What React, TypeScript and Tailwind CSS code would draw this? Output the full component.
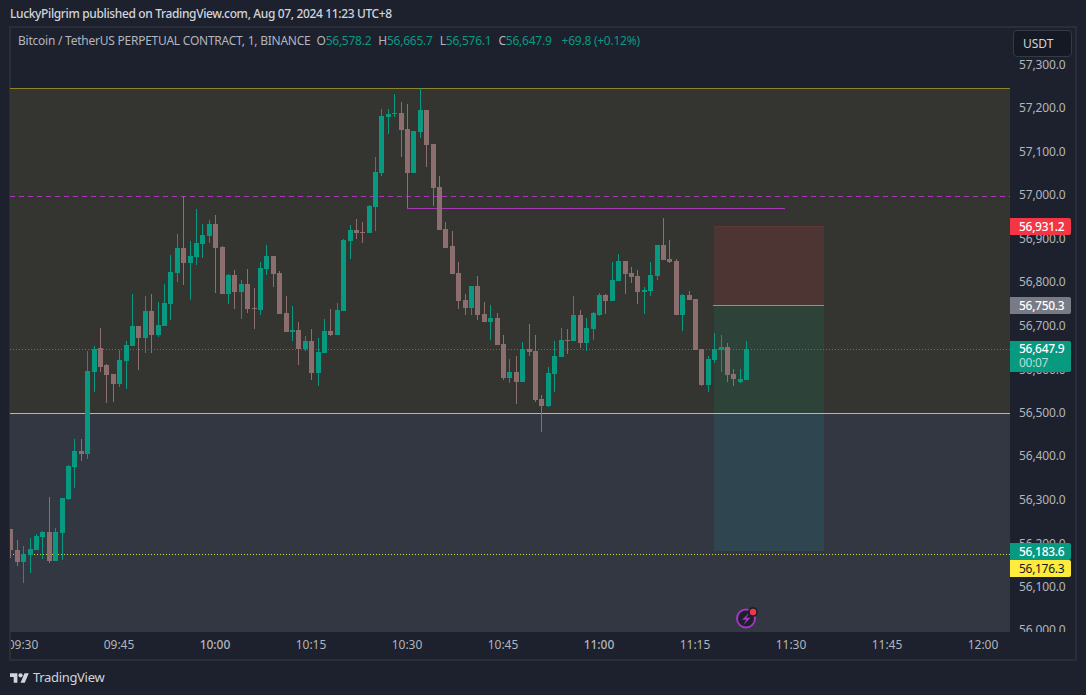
const X = [10,17,23,30,36,42,49,55,62,68,74,81,87,94,100,106,113,119,126,132,138,145,151,158,164,170,177,183,190,196,202,209,215,222,228,234,241,247,254,260,266,273,279,286,292,298,305,311,318,324,330,337,343,350,356,362,369,375,381,388,394,401,407,413,420,426,433,439,445,452,458,465,471,477,484,490,497,503,509,516,522,529,535,541,548,554,561,567,573,580,586,593,599,605,612,618,625,631,637,644,650,657,663,669,676,682,689,695,701,708,714,721,727,733,740,746];

const D: [string, number, number, number, number][] = [
  ["p",529,550,529,558],["p",550,562,540,566],["g",554,562,546,583],["g",549,555,538,573],["g",536,550,534,550],
  ["g",532,537,531,559],["p",532,561,497,563],["g",532,561,528,561],["g",498,533,498,560],["g",466,499,465,500],
  ["g",451,467,439,488],["p",451,454,439,461],["g",371,454,351,459],["g",349,372,346,392],["p",348,367,328,372],
  ["p",365,375,364,403],["p",374,384,374,402],["g",360,384,350,387],["g",345,361,341,389],["g",326,346,294,346],
  ["p",326,338,326,370],["g",311,338,296,353],["p",311,335,294,353],["g",325,335,302,337],["g",303,326,284,326],
  ["g",272,304,255,320],["g",248,273,234,282],["p",248,263,196,285],["g",256,263,241,300],["g",243,257,209,265],
  ["g",235,244,224,258],["g",224,236,220,243],["p",224,248,215,293],["p",247,294,246,294],["g",275,294,274,304],
  ["p",275,292,270,309],["g",284,292,280,319],["p",284,309,269,313],["p",308,309,288,329],["g",268,310,262,315],
  ["g",256,269,245,275],["p",256,274,256,287],["p",273,314,271,314],["p",313,332,296,332],["g",330,332,306,341],
  ["p",330,349,322,365],["g",341,349,336,351],["p",341,373,329,380],["g",352,373,338,386],["g",331,353,319,353],
  ["p",331,335,309,336],["g",310,335,303,335],["g",240,311,239,311],["g",230,241,225,259],["p",230,233,219,239],
  ["p",232,233,222,243],["g",206,233,205,233],["g",172,207,157,231],["g",116,173,109,176],["g",114,117,109,134],
  ["g",113,114,94,117],["p",113,130,102,157],["p",129,173,104,208],["g",131,173,131,173],["g",110,132,88,138],
  ["p",110,145,110,167],["p",144,188,144,206],["p",187,230,176,230],["p",229,248,222,248],["p",246,274,231,274],
  ["p",273,301,262,309],["p",300,308,294,315],["g",286,308,286,315],["p",286,315,276,320],["p",314,322,302,322],
  ["g",318,322,305,340],["p",318,345,313,345],["p",344,378,335,380],["g",372,378,359,383],["p",372,382,356,404],
  ["g",349,382,342,382],["p",349,352,324,356],["p",351,400,335,402],["p",399,406,395,432],["g",373,406,367,407],
  ["g",356,374,341,392],["g",340,357,328,357],["p",340,341,329,354],["g",315,341,296,341],["p",315,343,310,348],
  ["g",328,343,318,351],["g",313,329,312,340],["g",295,315,293,316],["p",295,301,294,314],["g",280,301,262,301],
  ["g",261,281,254,281],["p",261,274,261,294],["p",273,277,267,283],["p",276,292,270,304],["g",290,292,287,314],
  ["g",275,291,262,296],["g",245,276,245,280],["p",245,260,218,260],["p",259,262,240,263],["p",261,315,259,315],
  ["g",295,315,294,331],["p",295,300,291,300],["p",299,350,299,350],["p",349,385,349,386],["g",359,385,356,392],
  ["g",349,360,333,363],["g",347,350,335,372],["p",347,375,343,382],["p",374,379,369,386],["g",379,382,369,383],
  ["g",349,380,341,380],
];

const prices: [string, number][] = [
  ["57,300.0", 65], ["57,200.0", 108], ["57,100.0", 152], ["57,000.0", 195], ["56,900.0", 239],
  ["56,800.0", 282], ["56,700.0", 326], ["56,600.0", 370], ["56,500.0", 413], ["56,400.0", 456],
  ["56,300.0", 500], ["56,200.0", 544], ["56,100.0", 587], ["56,000.0", 630],
];

const times: [string, number, boolean][] = [
  ["09:30", 23, false], ["09:45", 119, false], ["10:00", 215, true], ["10:15", 311, false], ["10:30", 407, false],
  ["10:45", 503, false], ["11:00", 599, true], ["11:15", 695, false], ["11:30", 791, false], ["11:45", 887, false], ["12:00", 983, false],
];

function Tag({ top, h, cls, children }: { top: number; h: number; cls: string; children: React.ReactNode }) {
  return (
    <div
      className={`absolute left-0 w-[61px] rounded-r-[2px] pl-[9px] text-[12px] font-medium tracking-[-0.3px] ${cls}`}
      style={{ top: top - 28, height: h }}
    >
      {children}
    </div>
  );
}

function Chart() {
  return (
    <svg viewBox="10 28 1000 604" width={1000} height={604} shapeRendering="crispEdges" className="block">
      <rect x={10} y={88} width={1000} height={325} fill="#343530" />
      <rect x={10} y={413} width={1000} height={219} fill="#333742" />
      <rect x={10} y={88} width={1000} height={1} fill="#8f8427" />
      <rect x={714} y={226} width={110} height={79} fill="#4c3532" />
      <rect x={714} y={305} width={110} height={108} fill="#2d4339" />
      <rect x={714} y={413} width={110} height={138} fill="#2f4650" />
      <rect x={714} y={226} width={110} height={1} fill="#5c3534" />
      <rect x={713} y={305} width={111} height={1} fill="#8d8f90" />
      <rect x={10} y={413} width={1000} height={1} fill="#b2b5be" />
      <line x1={10} x2={1010} y1={196.5} y2={196.5} stroke="#a936b7" strokeDasharray="5 4" />
      <line x1={407} x2={785} y1={208.5} y2={208.5} stroke="#a936b7" />
      <line x1={10} x2={1010} y1={349.5} y2={349.5} stroke="#089981" strokeDasharray="1 2" />
      <line x1={13} x2={1010} y1={554.5} y2={554.5} stroke="#cddc39" strokeDasharray="1 2" />
      {D.map(([c, bt, bb, wt, wb], k) => {
        const x = X[k];
        const fill = c === "g" ? "#089981" : "#8d6e6f";
        return (
          <g key={k} fill={fill}>
            <rect x={x} y={wt} width={1} height={wb - wt} />
            <rect x={x - 2} y={bt} width={5} height={bb - bt} />
          </g>
        );
      })}
      <g shapeRendering="geometricPrecision">
        <circle cx={746} cy={618.5} r={9} fill="#1d212d" stroke="#a336c4" strokeWidth={2} />
        <path d="M749.5 612.5 L742 619.8 H746.2 L743.5 625 L750.5 617.8 H746.3 Z" fill="#a336c4" />
        <circle cx={753} cy={612} r={5} fill="#1d212d" />
        <circle cx={753} cy={612} r={3.2} fill="#f23645" />
      </g>
    </svg>
  );
}

export default function App() {
  return (
    <div
      className="flex h-[695px] w-[1086px] flex-col overflow-hidden bg-[#1d212d] text-[12px] text-[#b2b5be]"
      style={{ fontFamily: '"Noto Sans", sans-serif' }}
    >
      <div className="flex h-[26px] items-center pl-[10px] pt-px text-[12px] font-medium tracking-[-0.36px] text-[#d1d4dc]">
        LuckyPilgrim published on TradingView.com, Aug 07, 2024 11:23 UTC+8
      </div>
      <div className="ml-[9px] flex h-[635px] w-[1068px] flex-col border-2 border-[#2a2e39]">
        <div className="flex h-[604px]">
          <div className="relative -ml-px h-[604px] w-[1000px] shrink-0">
            <Chart />
            <div className="absolute left-[8px] top-[5px] flex gap-[7px] whitespace-nowrap leading-[16px] tracking-[-0.24px]">
              <span className="-mr-px">Bitcoin / TetherUS PERPETUAL CONTRACT, 1, BINANCE</span>
              <span>O<span className="text-[#089981]">56,578.2</span></span>
              <span>H<span className="text-[#089981]">56,665.7</span></span>
              <span>L<span className="text-[#089981]">56,576.1</span></span>
              <span>C<span className="text-[#089981]">56,647.9</span></span>
              <span className="ml-[3px] text-[#089981]">+69.8 (+0.12%)</span>
            </div>
          </div>
          <div className="relative h-[604px] w-[65px] shrink-0 overflow-hidden">
            {prices.map(([t, y]) => (
              <div key={t} className="absolute left-[9px] leading-[16px] tracking-[-0.15px]" style={{ top: y - 36 }}>
                {t}
              </div>
            ))}
            <Tag top={218} h={17} cls="bg-[#f23645] leading-[17px] text-white">56,931.2</Tag>
            <Tag top={297} h={17} cls="bg-[#787b86] leading-[17px] text-white">56,750.3</Tag>
            <Tag top={341} h={31} cls="bg-[#089981] pt-px leading-[14px] text-white">
              <div>56,647.9</div>
              <div className="font-normal text-white/70">00:07</div>
            </Tag>
            <Tag top={543} h={17} cls="bg-[#089981] leading-[17px] text-white">56,183.6</Tag>
            <Tag top={560} h={17} cls="bg-[#ffeb3b] leading-[17px] !font-normal text-[#131722]">56,176.3</Tag>
            <div className="absolute left-[3px] top-[2px] flex h-[27px] w-[59px] items-center rounded-[4px] border border-[#363a45] bg-[#151924] pl-[9px] text-[#d1d4dc] shadow-[0_0_0_3px_#1d212d]">
              USDT
            </div>
          </div>
        </div>
        <div className="relative h-[27px] overflow-hidden">
          {times.map(([t, x, b]) => (
            <div
              key={t}
              className={`absolute top-[5px] -translate-x-1/2 leading-[16px] ${b ? "font-medium" : ""}`}
              style={{ left: x - 11 }}
            >
              {t}
            </div>
          ))}
        </div>
      </div>
      <div className="flex flex-1 items-center gap-[4px] pl-[10px] text-[13px] text-[#d1d4dc]">
        <svg viewBox="0 0 36 28" width={19} height={15} fill="#d1d4dc">
          <path d="M14 22H7V11H0V4h14v18zM28 22h-8l7.5-18h8L28 22z" />
          <circle cx={20} cy={8} r={4} />
        </svg>
        <span className="tracking-[-0.32px]">TradingView</span>
      </div>
    </div>
  );
}
